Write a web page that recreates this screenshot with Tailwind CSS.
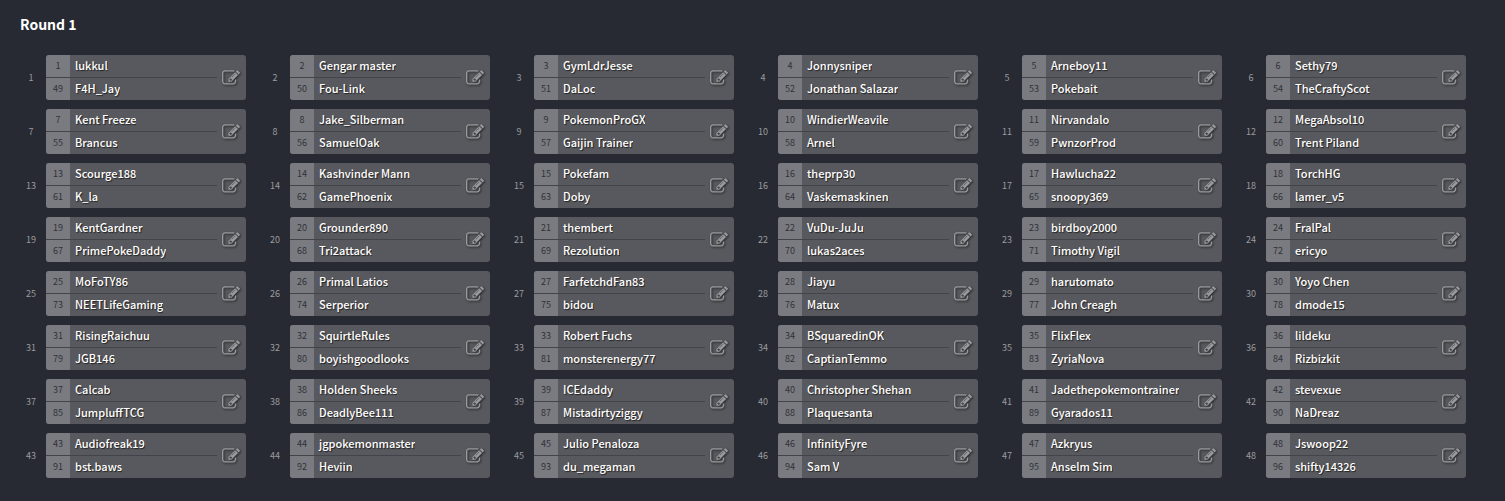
<!DOCTYPE html>
<html lang="en">
<head>
  <meta charset="UTF-8">
  <meta name="viewport" content="width=device-width, initial-scale=1.0">
  <title>Round 1</title>
  <script src="https://cdn.jsdelivr.net/npm/@tailwindcss/browser@4"></script>
</head>
<body class="min-h-screen bg-[#272a33] text-white font-['Source_Sans_Pro','Noto_Sans_CJK_SC',sans-serif]">
  <svg class="hidden">
    <symbol id="edit-icon" viewBox="0 0 1792 1792">
      <path d="M888 1184l116-116-152-152-116 116v56h96v96h56zm440-720q-16-16-33 1l-350 350q-17 17-1 33t33-1l350-350q17-17 1-33zm80 594v190q0 119-84.500 203.500t-203.500 84.500h-832q-119 0-203.500-84.500t-84.500-203.500v-832q0-119 84.500-203.500t203.500-84.500h832q63 0 117 25 15 7 18 23 3 17-9 29l-49 49q-14 14-32 8-23-6-45-6h-832q-66 0-113 47t-47 113v832q0 66 47 113t113 47h832q66 0 113-47t47-113v-126q0-13 9-22l64-64q15-15 35-7t20 29zm-96-738l288 288-672 672h-288v-288zm444 132l-92 92-288-288 92-92q28-28 68-28t68 28l152 152q28 28 28 68t-28 68z"/>
    </symbol>
  </svg>

  <main class="p-4">
    <h1 class="pl-1 text-sm leading-4 font-bold">Round 1</h1>
    <div id="matches" class="mt-[23px] grid grid-cols-[repeat(auto-fill,230px)] gap-x-3.5 gap-y-[9px]"></div>
  </main>

  <script>
    // two players per match, in match order
    const players = [
      'lukkul', 'F4H_Jay', 'Gengar master', 'Fou-Link', 'GymLdrJesse', 'DaLoc',
      'Jonnysniper', 'Jonathan Salazar', 'Arneboy11', 'Pokebait', 'Sethy79', 'TheCraftyScot',
      'Kent Freeze', 'Brancus', 'Jake_Silberman', 'SamuelOak', 'PokemonProGX', 'Gaijin Trainer',
      'WindierWeavile', 'Arnel', 'Nirvandalo', 'PwnzorProd', 'MegaAbsol10', 'Trent Piland',
      'Scourge188', 'K_la', 'Kashvinder Mann', 'GamePhoenix', 'Pokefam', 'Doby',
      'theprp30', 'Vaskemaskinen', 'Hawlucha22', 'snoopy369', 'TorchHG', 'lamer_v5',
      'KentGardner', 'PrimePokeDaddy', 'Grounder890', 'Tri2attack', 'thembert', 'Rezolution',
      'VuDu-JuJu', 'lukas2aces', 'birdboy2000', 'Timothy Vigil', 'FralPal', 'ericyo',
      'MoFoTY86', 'NEETLifeGaming', 'Primal Latios', 'Serperior', 'FarfetchdFan83', 'bidou',
      'Jiayu', 'Matux', 'harutomato', 'John Creagh', 'Yoyo Chen', 'dmode15',
      'RisingRaichuu', 'JGB146', 'SquirtleRules', 'boyishgoodlooks', 'Robert Fuchs', 'monsterenergy77',
      'BSquaredinOK', 'CaptianTemmo', 'FlixFlex', 'ZyriaNova', 'lildeku', 'Rizbizkit',
      'Calcab', 'JumpluffTCG', 'Holden Sheeks', 'DeadlyBee111', 'ICEdaddy', 'Mistadirtyziggy',
      'Christopher Shehan', 'Plaquesanta', 'Jadethepokemontrainer', 'Gyarados11', 'stevexue', 'NaDreaz',
      'Audiofreak19', 'bst.baws', 'jgpokemonmaster', 'Heviin', 'Julio Penaloza', 'du_megaman',
      'InfinityFyre', 'Sam V', 'Azkryus', 'Anselm Sim', 'Jswoop22', 'shifty14326'
    ];

    function playerRow(seed, name) {
      return `
        <div class="flex h-[22px]">
          <span class="w-6 shrink-0 bg-[#7a7b80] text-center text-[9px] leading-[22px] text-[#303238]">${seed}</span>
          <span class="truncate pl-[5px] text-[11px] leading-5 font-medium [text-shadow:1px_1px_1px_#222]">${name}</span>
        </div>`;
    }

    let html = '';
    for (let i = 1; i <= 48; i++) {
      html += `
        <div class="flex items-center">
          <span class="w-[30px] shrink-0 text-center text-[9px] leading-4 text-[#9a9b9f]">${i}</span>
          <div class="relative grow overflow-hidden rounded-[3px] bg-[#58595e]">
            ${playerRow(i, players[i * 2 - 2])}
            <div class="mr-[29px] h-px bg-[#434449]"></div>
            ${playerRow(i + 48, players[i * 2 - 1])}
            <button aria-label="Edit match ${i}" class="absolute inset-y-0 right-0 flex w-[30px] items-center justify-center text-[#999a9f] hover:text-white">
              <svg class="size-[18px] fill-current drop-shadow-[1px_1px_1px_#222]"><use href="#edit-icon"/></svg>
            </button>
          </div>
        </div>`;
    }
    document.getElementById('matches').innerHTML = html;
  </script>
</body>
</html>
